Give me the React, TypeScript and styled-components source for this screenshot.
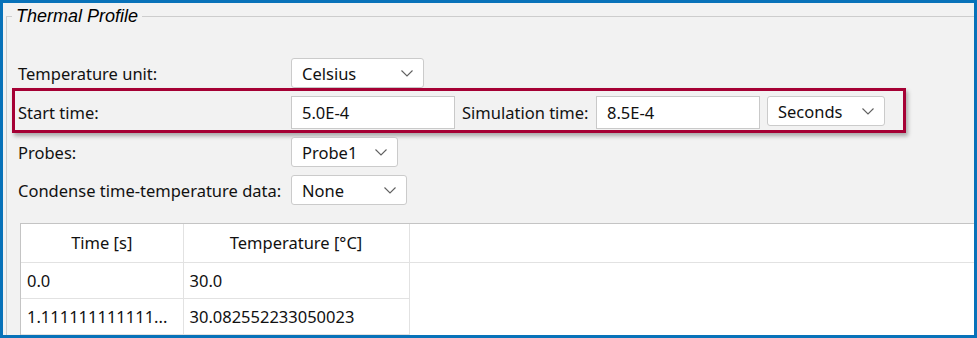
import React from "react";
import styled, { createGlobalStyle } from "styled-components";

const Global = createGlobalStyle`
  html, body { margin: 0; padding: 0; background: #f2f2f2; }
  * { box-sizing: border-box; }
`;

const UI_FONT = `"Noto Sans", "Open Sans", sans-serif`;

const Frame = styled.div`
  width: 977px;
  height: 338px;
  border: 3px solid #0872b9;
  background: #f2f2f2;
  overflow: hidden;
  font-family: ${UI_FONT};
  font-size: 16.5px;
  color: #111;
`;

const Group = styled.fieldset`
  margin: 3px -4px 0 3px;
  padding: 0 0 0 5px;
  border: 1px solid #cdcdcd;
  min-width: 0;
  height: 400px;
`;

const Legend = styled.legend`
  margin-left: 0;
  padding: 0 4px;
  height: 20px;
  line-height: 20px;
  font-family: "Liberation Sans", Arial, sans-serif;
  font-style: italic;
  font-size: 18px;
  color: #000;
`;

const Form = styled.div`
  display: flex;
  flex-direction: column;
  padding-top: 32px;
`;

const Row = styled.div<{ $top?: number }>`
  display: flex;
  align-items: center;
  height: 30px;
  padding-left: 6px;
  margin-top: ${(p) => p.$top ?? 0}px;
`;

const Highlight = styled.div`
  display: flex;
  align-items: flex-start;
  width: 894px;
  height: 45px;
  padding: 5px 0 0 3px;
  border: 3px solid #a50034;
  box-shadow: 2px 3px 4px rgba(0, 0, 0, 0.3);
`;

const Label = styled.span<{ $w?: number }>`
  display: inline-flex;
  align-items: center;
  width: ${(p) => (p.$w ? `${p.$w}px` : "auto")};
  flex: none;
  white-space: nowrap;
  height: 32px;
`;

const Combo = styled.div<{ $w: number }>`
  display: flex;
  align-items: center;
  justify-content: space-between;
  width: ${(p) => p.$w}px;
  height: 30px;
  padding: 0 10px;
  background: #fff;
  border: 1px solid #cbcbcb;
  border-radius: 3px;
  flex: none;
`;

const Input = styled.div<{ $w: number }>`
  display: flex;
  align-items: center;
  width: ${(p) => p.$w}px;
  height: 33px;
  padding: 0 10px;
  background: #fff;
  border: 1px solid #c9c9c9;
  flex: none;
`;

const Spacer = styled.div<{ $w: number }>`
  width: ${(p) => p.$w}px;
  flex: none;
`;

const TableWrap = styled.div`
  margin: 18px 0 0 8px;
  border-top: 1px solid #c4c4c4;
  border-left: 1px solid #c4c4c4;
  background: #fff;
`;

const Table = styled.table`
  border-collapse: collapse;
  width: 100%;
  table-layout: fixed;
  font-family: ${UI_FONT};
  font-size: 16.5px;
  color: #111;
`;

const Th = styled.th<{ $w?: number }>`
  width: ${(p) => (p.$w ? `${p.$w}px` : "auto")};
  height: 38px;
  font-weight: normal;
  text-align: center;
  border: 1px solid #e2e2e2;
  border-top: none;
  border-left: none;
`;

const Td = styled.td<{ $blank?: boolean }>`
  height: 36px;
  padding: 0 6px;
  white-space: nowrap;
  overflow: hidden;
  border-right: 1px solid #e2e2e2;
  border-bottom: ${(p) => (p.$blank ? "none" : "1px solid #e2e2e2")};
`;

const Chevron = () => (
  <svg width="12" height="7" viewBox="0 0 12 7" fill="none">
    <polyline points="0.5,0.5 6,6 11.5,0.5" stroke="#606060" strokeWidth="1.1" />
  </svg>
);

const Select = ({ w, value }: { w: number; value: string }) => (
  <Combo $w={w}>
    <span>{value}</span>
    <Chevron />
  </Combo>
);

export default function App() {
  return (
    <>
      <Global />
      <Frame>
        <Group>
          <Legend>Thermal Profile</Legend>
          <Form>
            <Row>
              <Label $w={273}>Temperature unit:</Label>
              <Select w={133} value="Celsius" />
            </Row>
            <Highlight>
              <Label $w={273}>Start time:</Label>
              <Input $w={164}>5.0E-4</Input>
              <Spacer $w={7} />
              <Label $w={134}>Simulation time:</Label>
              <Input $w={164}>8.5E-4</Input>
              <Spacer $w={7} />
              <Select w={118} value="Seconds" />
            </Highlight>
            <Row $top={4}>
              <Label $w={273}>Probes:</Label>
              <Select w={107} value="Probe1" />
            </Row>
            <Row $top={8}>
              <Label $w={273}>Condense time-temperature data:</Label>
              <Select w={116} value="None" />
            </Row>
          </Form>
          <TableWrap>
            <Table>
              <thead>
                <tr>
                  <Th $w={162}>Time [s]</Th>
                  <Th $w={226}>Temperature [°C]</Th>
                  <Th />
                </tr>
              </thead>
              <tbody>
                <tr>
                  <Td>0.0</Td>
                  <Td>30.0</Td>
                  <Td $blank />
                </tr>
                <tr>
                  <Td>1.111111111111...</Td>
                  <Td>30.082552233050023</Td>
                  <Td $blank />
                </tr>
              </tbody>
            </Table>
          </TableWrap>
        </Group>
      </Frame>
    </>
  );
}
